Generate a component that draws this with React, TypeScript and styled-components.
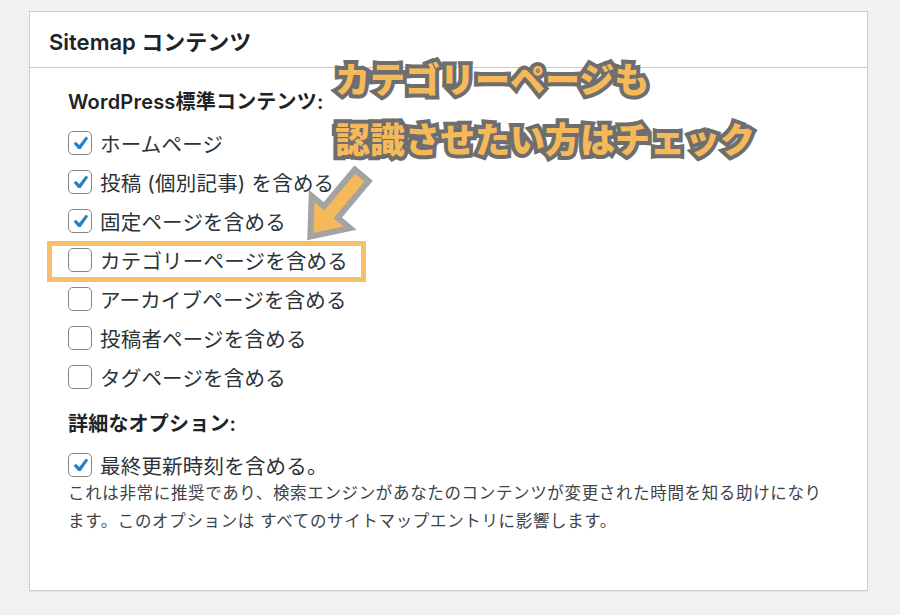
import React from "react";
import styled, { createGlobalStyle } from "styled-components";

const GlobalStyle = createGlobalStyle`
  html, body {
    margin: 0;
    padding: 0;
    background: #f1f1f1;
  }
  body {
    font-family: Inter, "Noto Sans CJK JP", sans-serif;
    color: #1d2327;
  }
`;

const Page = styled.div`
  width: 900px;
  height: 615px;
  padding: 11px 0 0 29px;
  box-sizing: border-box;
`;

const Panel = styled.section`
  position: relative;
  width: 839px;
  height: 580px;
  box-sizing: border-box;
  background: #fff;
  border: 1px solid #c9cdd1;
  box-shadow: 0 1px 1px rgba(0, 0, 0, 0.04);
`;

const Header = styled.header`
  height: 55px;
  display: flex;
  align-items: center;
  padding: 0 19px;
  border-bottom: 1px solid #c9cdd1;
`;

const Title = styled.h2`
  margin: 0;
  font-size: 22px;
  font-weight: 600;
  color: #1d2327;
`;

const Body = styled.div`
  padding: 17px 38px 0;
`;

const SectionTitle = styled.h3<{ $top?: number; $bottom?: number }>`
  margin: ${(p) => p.$top ?? 0}px 0 ${(p) => p.$bottom ?? 4}px;
  font-size: 20px;
  line-height: 34px;
  font-weight: 600;
  color: #1d2327;
  letter-spacing: 0.2px;
`;

const Row = styled.label<{ $h?: number }>`
  display: flex;
  align-items: center;
  gap: 8px;
  height: ${(p) => p.$h ?? 39}px;
  font-size: 20.5px;
  color: #2c3338;
  letter-spacing: 0.2px;
`;

const Box = styled.span`
  width: 24px;
  height: 24px;
  flex: none;
  box-sizing: border-box;
  border: 1.5px solid #84878c;
  border-radius: 5px;
  background: #fff;
  display: flex;
  align-items: center;
  justify-content: center;
`;

const Description = styled.p`
  margin: -1px 0 0;
  font-size: 16.5px;
  line-height: 28px;
  color: #3c434a;
  letter-spacing: 0.65px;
`;

const Highlight = styled.div`
  position: absolute;
  left: 17px;
  top: 229px;
  width: 319px;
  height: 41px;
  box-sizing: border-box;
  border: 5px solid #f6bf68;
  pointer-events: none;
`;

const Callout = styled.div`
  position: absolute;
  left: 305px;
  top: 36px;
  font-family: "Noto Sans CJK JP", sans-serif;
  font-size: 35px;
  font-weight: 900;
  line-height: 60px;
  color: #f6b95a;
  -webkit-text-stroke: 8px #6e6e6e;
  paint-order: stroke fill;
  white-space: nowrap;
`;

const Arrow = styled.svg`
  position: absolute;
  left: 246px;
  top: 134px;
`;

const Check = () => (
  <svg width="22" height="22" viewBox="0 0 20 20">
    <path
      d="M15.4 4.2l2 1.4-6.8 9.8H8.4L4.3 10.7l1.9-1.8 3.2 3z"
      fill="#2680c2"
    />
  </svg>
);

const Checkbox = ({ checked }: { checked?: boolean }) => (
  <Box>{checked && <Check />}</Box>
);

const items = [
  { label: "ホームページ", checked: true },
  { label: "投稿 (個別記事) を含める", checked: true },
  { label: "固定ページを含める", checked: true },
  { label: "カテゴリーページを含める", checked: false },
  { label: "アーカイブページを含める", checked: false },
  { label: "投稿者ページを含める", checked: false },
  { label: "タグページを含める", checked: false },
];

export default function App() {
  return (
    <>
      <GlobalStyle />
      <Page>
        <Panel>
          <Header>
            <Title>Sitemap コンテンツ</Title>
          </Header>
          <Body>
            <SectionTitle>WordPress標準コンテンツ:</SectionTitle>
            {items.map((it) => (
              <Row key={it.label}>
                <Checkbox checked={it.checked} />
                {it.label}
              </Row>
            ))}
            <SectionTitle $top={11} $bottom={9}>
              詳細なオプション:
            </SectionTitle>
            <Row $h={30}>
              <Checkbox checked />
              最終更新時刻を含める。
            </Row>
            <Description>
              これは非常に推奨であり、検索エンジンがあなたのコンテンツが変更された時間を知る助けになり
              ます。このオプションは すべてのサイトマップエントリに影響します。
            </Description>
          </Body>

          <Highlight />
          <Arrow width="120" height="120" viewBox="0 0 120 120">
            <g transform="translate(60 60) rotate(130)">
              <path
                d="M-40 -9 L8 -9 L8 -25 L40 0 L8 25 L8 9 L-40 9 Z"
                fill="#f6b95a"
                stroke="#a3a3a3"
                strokeWidth="6"
                strokeLinejoin="miter"
              />
            </g>
          </Arrow>
          <Callout>
            カテゴリーページも
            <br />
            認識させたい方はチェック
          </Callout>
        </Panel>
      </Page>
    </>
  );
}
